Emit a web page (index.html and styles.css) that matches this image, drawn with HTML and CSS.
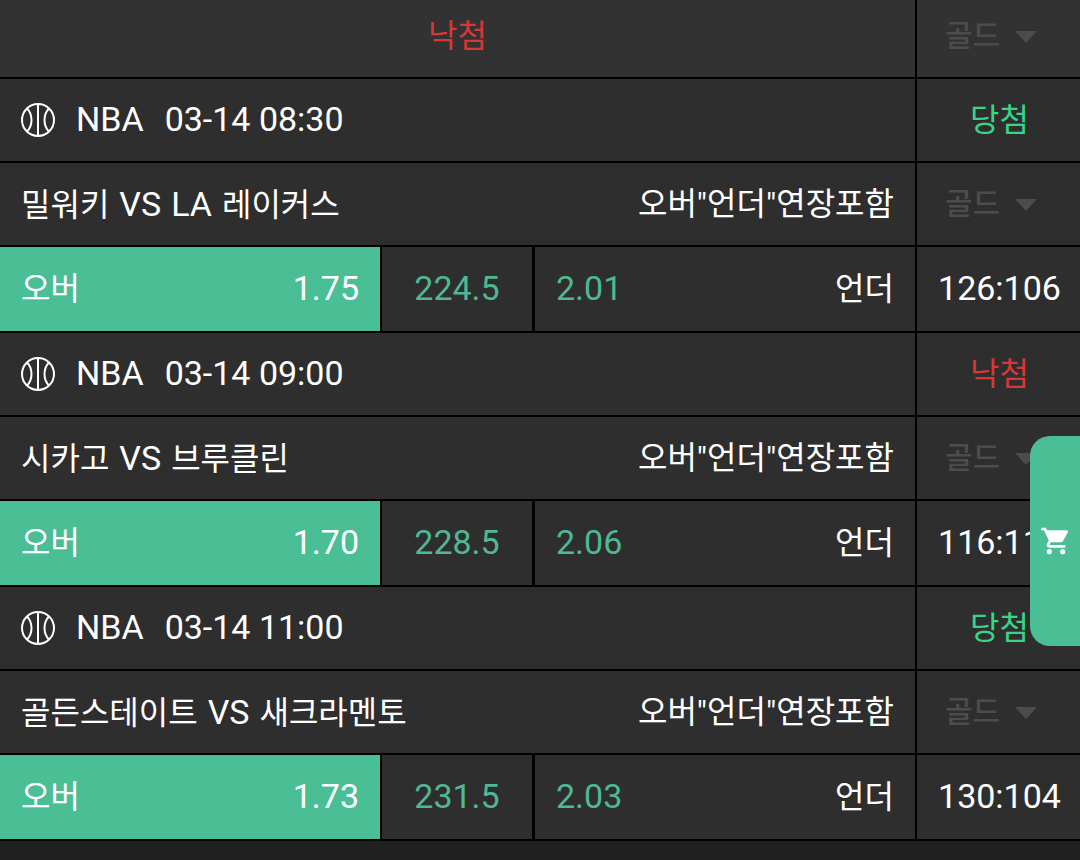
FILE: index.html
```html
<!DOCTYPE html>
<html lang="ko">
<head>
<meta charset="utf-8">
<meta name="viewport" content="width=device-width, initial-scale=1">
<title>NBA 오버 언더</title>
<link rel="stylesheet" href="styles.css">
</head>
<body>
<svg class="symbols" aria-hidden="true">
  <symbol id="ball" viewBox="0 0 34 34">
    <g fill="none" stroke="currentColor" stroke-width="2">
      <circle cx="17" cy="17" r="16"/>
      <path d="M17 1v32M6 5.500Q10.500 10 10.500 17T6 28.500M28 5.500Q23.500 10 23.500 17T28 28.500"/>
    </g>
  </symbol>
  <symbol id="cart" viewBox="0 0 24 24">
    <path fill="currentColor" d="M7 18c-1.100 0-1.990.9-1.990 2S5.900 22 7 22s2-.9 2-2-.9-2-2-2zM1 2v2h2l3.600 7.590-1.350 2.450c-.16.28-.25.61-.25.96 0 1.100.9 2 2 2h12v-2H7.420c-.14 0-.25-.11-.25-.25l.03-.12.9-1.630h7.450c.75 0 1.410-.41 1.750-1.030l3.580-6.490A1 1 0 0 0 20.010 4H5.210l-.94-2H1zm16 16c-1.100 0-1.990.9-1.990 2s.89 2 1.990 2 2-.9 2-2-.9-2-2-2z"/>
  </symbol>
  <symbol id="arrow" viewBox="0 0 22 12">
    <path fill="currentColor" d="M0 0h22L11 12z"/>
  </symbol>
</svg>
<main class="bets">
  <header class="row summary">
    <div class="cell result lost">낙첨</div>
    <div class="cell side">
      <label class="picker"><select aria-label="골드" disabled><option>골드</option></select><svg class="arrow"><use href="#arrow"/></svg></label>
    </div>
  </header>

  <section class="match">
    <div class="row">
      <div class="cell league"><svg class="ball"><use href="#ball"/></svg><span class="num">NBA</span><time class="num">03-14 08:30</time></div>
      <div class="cell side won">당첨</div>
    </div>
    <div class="row">
      <div class="cell game"><div class="teams"><span>밀워키</span> <span class="latin">VS</span> <span class="latin">LA</span> <span>레이커스</span></div><span>오버"언더"연장포함</span></div>
      <div class="cell side">
        <label class="picker"><select aria-label="골드" disabled><option>골드</option></select><svg class="arrow"><use href="#arrow"/></svg></label>
      </div>
    </div>
    <div class="row odds">
      <div class="lines">
        <button class="pick chosen" type="button"><span>오버</span><span class="num">1.75</span></button>
        <div class="total"><span class="num">224.5</span></div>
        <button class="pick under" type="button"><span class="num rate">2.01</span><span>언더</span></button>
      </div>
      <div class="cell side"><span class="num">126:106</span></div>
    </div>
  </section>

  <section class="match">
    <div class="row">
      <div class="cell league"><svg class="ball"><use href="#ball"/></svg><span class="num">NBA</span><time class="num">03-14 09:00</time></div>
      <div class="cell side lost">낙첨</div>
    </div>
    <div class="row">
      <div class="cell game"><div class="teams"><span>시카고</span> <span class="latin">VS</span> <span>브루클린</span></div><span>오버"언더"연장포함</span></div>
      <div class="cell side">
        <label class="picker"><select aria-label="골드" disabled><option>골드</option></select><svg class="arrow"><use href="#arrow"/></svg></label>
      </div>
    </div>
    <div class="row odds">
      <div class="lines">
        <button class="pick chosen" type="button"><span>오버</span><span class="num">1.70</span></button>
        <div class="total"><span class="num">228.5</span></div>
        <button class="pick under" type="button"><span class="num rate">2.06</span><span>언더</span></button>
      </div>
      <div class="cell side"><span class="num">116:110</span></div>
    </div>
  </section>

  <section class="match">
    <div class="row">
      <div class="cell league"><svg class="ball"><use href="#ball"/></svg><span class="num">NBA</span><time class="num">03-14 11:00</time></div>
      <div class="cell side won">당첨</div>
    </div>
    <div class="row">
      <div class="cell game"><div class="teams"><span>골든스테이트</span> <span class="latin">VS</span> <span>새크라멘토</span></div><span>오버"언더"연장포함</span></div>
      <div class="cell side">
        <label class="picker"><select aria-label="골드" disabled><option>골드</option></select><svg class="arrow"><use href="#arrow"/></svg></label>
      </div>
    </div>
    <div class="row odds">
      <div class="lines">
        <button class="pick chosen" type="button"><span>오버</span><span class="num">1.73</span></button>
        <div class="total"><span class="num">231.5</span></div>
        <button class="pick under" type="button"><span class="num rate">2.03</span><span>언더</span></button>
      </div>
      <div class="cell side"><span class="num">130:104</span></div>
    </div>
  </section>
</main>
<button class="cart" type="button" aria-label="장바구니"><svg><use href="#cart"/></svg></button>
</body>
</html>
```
FILE: styles.css
```css
* {
  box-sizing: border-box;
}

body {
  margin: 0;
  background: #202020;
  color: #fff;
  font: 32px/40px Roboto, "Noto Sans CJK KR", sans-serif;
}

button,
select {
  margin: 0;
  border: 0;
  color: inherit;
  font: inherit;
}

.symbols {
  display: none;
}

.row {
  display: grid;
  grid-template-columns: minmax(0, 1fr) 163px;
  gap: 2px;
  min-height: 84px;
  border-bottom: 2px solid #000;
  background: #000;
}

.summary {
  min-height: 79px;
}

.odds {
  min-height: 86px;
}

.cell {
  display: flex;
  align-items: center;
  background: #2e2e2e;
  white-space: nowrap;
}

.summary .cell {
  background: #323232;
  padding-bottom: 6px;
}

.result,
.side {
  justify-content: center;
}

.side {
  padding-left: 2px;
}

.league {
  gap: 21px;
  padding: 0 21px;
}

.ball {
  width: 34px;
  height: 34px;
}

.game {
  justify-content: space-between;
  padding: 0 21px;
}

.teams {
  display: flex;
  align-items: baseline;
  gap: 10px;
}

.num,
.latin {
  font-size: 34px;
}

.num {
  padding-bottom: 2px;
}

.won {
  color: #37d587;
}

.lost {
  color: #d93636;
}

.picker {
  display: flex;
  align-items: center;
  gap: 14px;
  padding-right: 17px;
  color: #4c4c4c;
}

.picker select {
  appearance: none;
  padding: 0;
  background: none;
  font-size: 30px;
  font-weight: 500;
  opacity: 1;
}

.arrow {
  width: 22px;
  height: 12px;
  margin-top: 2px;
}

.lines {
  display: grid;
  grid-template-columns: 380fr 150px 381fr;
  column-gap: 2px;
}

.pick,
.total {
  display: flex;
  align-items: center;
  background: #2e2e2e;
}

.pick {
  justify-content: space-between;
  padding: 0 21px;
}

.pick.chosen {
  background: #4abf96;
}

.total {
  justify-content: center;
}

.total,
.rate {
  color: #4fb893;
}

.under {
  margin-left: 1px;
}

.cart {
  position: fixed;
  top: 436px;
  right: 0;
  display: flex;
  align-items: center;
  justify-content: center;
  width: 50px;
  height: 210px;
  padding: 0 0 0 2px;
  border-radius: 20px 0 0 20px;
  background: #4abf96;
}

.cart svg {
  width: 32px;
  height: 32px;
}
```
